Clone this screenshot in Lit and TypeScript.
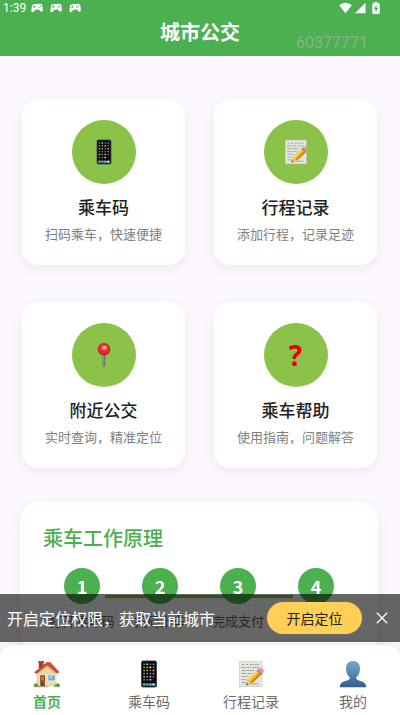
import { LitElement, html, css, svg } from "lit";
import { customElement, state } from "lit/decorators.js";

const dotColors = ["#4caf50", "#e6e6e6", "#9c4fd6", "#43c85a", "#3fa9f5", "#f0b429", "#eeeeee", "#e05252", "#f2a83b", "#7bd17f", "#d9534f", "#c9ccd1", "#3b8ff0", "#d94bc2", "#4a7df0", "#e8843c", "#e7d34c", "#39c0a3", "#cfd3d8", "#e0574a", "#2f8ff5", "#e05a3c", "#ececec", "#111111"];

const phone = html`<svg class="art" viewBox="0 0 28 28" aria-hidden="true">
  <rect x="6" y="0.6" width="16" height="26.8" rx="2" fill="#4b4d50"/>
  <rect x="6.9" y="1.3" width="14.2" height="25.4" rx="1.3" fill="#0b0b0d"/>
  ${dotColors.map((c, i) => svg`<rect x=${8.3 + (i % 4) * 3.1} y=${3.5 + Math.floor(i / 4) * 3.1} width="1.7" height="1.6" rx="0.5" fill=${c}/>`)}
  <rect x="7.4" y="23" width="13.2" height="3" rx="0.6" fill="#37474f"/>
  <rect x="8.1" y="23.5" width="2.2" height="2" rx="0.5" fill="#58d36a"/>
  <rect x="11.2" y="23.5" width="2.2" height="2" rx="0.5" fill="#3fa9f5"/>
  <rect x="14.3" y="23.5" width="2.2" height="2" rx="0.5" fill="#63c7f0"/>
  <rect x="17.4" y="23.5" width="2.2" height="2" rx="0.5" fill="#ececec"/>
</svg>`;

const memo = html`<svg class="art" viewBox="0 0 28 28" aria-hidden="true">
  <rect x="2.2" y="1" width="23.2" height="26" fill="#c9c9c6"/>
  <rect x="2.8" y="1.5" width="22" height="24.8" fill="#e4e4e1"/>
  <g stroke="#8d8d8d" stroke-width="0.9" fill="none">
    <path d="M5 4.5h3m1 0h2m2 0h4m1 0h4" stroke-dasharray="2 0.7"/>
    <path d="M4.5 7.5h5m1 0h4m1.500 0h6" stroke-dasharray="1.600 0.6"/>
    <path d="M5 10.500h4m1 0h7" stroke-dasharray="2.200 0.7"/>
    <path d="M4.500 13.500h5m1 0h5" stroke-dasharray="1.800 0.6"/>
    <path d="M5 16.500h7M4.500 19.500h5M5 22.500h4M13 24h9" stroke-dasharray="1.700 0.6"/>
  </g>
  <path d="M9.200 25.300l1.400-5.600L20.300 10l4.400 4.200-9.800 9.300z" fill="#f3b01c"/>
  <path d="M10.600 19.700L20.300 10l1.500 1.400-9.700 9.800z" fill="#ffd255"/>
  <path d="M13.500 22.300l9.700-9.500 1.500 1.400-9.800 9.300z" fill="#c98a10"/>
  <path d="M9.200 25.300l1.400-5.600 4.300 3.800z" fill="#e8c492"/>
  <path d="M9.200 25.300l0.600-2.300 1.600 1.600z" fill="#3a3128"/>
  <path d="M19.600 10.700l1.700-1.700 4.400 4.200-1.700 1.700z" fill="#8d949c"/>
  <path d="M21.300 9c1.300-1.500 3.300-1.200 4.500 0s1.300 2.900-.1 4.200z" fill="#ee8f92"/>
</svg>`;

const pin = html`<svg class="art" viewBox="0 0 28 28" aria-hidden="true">
  <path d="M12.300 11h3.400l-.5 14.500c0 .9-2.300.9-2.400 0z" fill="#62646c"/>
  <path d="M13.300 13h1l-.1 12h-.6z" fill="#b2b5bf"/>
  <circle cx="14" cy="7.800" r="6.700" fill="#b91f1f"/>
  <circle cx="13.900" cy="7.400" r="5.900" fill="#df2e2a"/>
  <ellipse cx="14.400" cy="6.400" rx="3.300" ry="2.600" fill="#ee6a5c"/>
  <ellipse cx="14.800" cy="5.800" rx="1.600" ry="1.200" fill="#ffc9bf"/>
</svg>`;

const house = html`<svg class="art" viewBox="0 0 28 28" aria-hidden="true">
  <path d="M5.800 1.500h4.700v7H5.800z" fill="#9c3a2c"/>
  <path d="M5.200 1h6v1.800h-6z" fill="#bb5040"/>
  <path d="M3.500 13L14 3.800 23.500 12v14.500h-20z" fill="#efd7a4"/>
  <path d="M3.500 13.500L14 5l9.500 8.500V15L14 7.500 3.500 15z" fill="#d8b67b"/>
  <path d="M14 2.200h3.200l9 9.800-1.800 1.400L14 5 3.200 13.700 1.400 12.300z" fill="#b3342c"/>
  <path d="M14 2.200L1.400 12.300l.9.700L14 3.700l11 9.200 1.200-.9-9-9.800z" fill="#d05246"/>
  <path d="M6.500 14.500h6.200v12H6.500z" fill="#f7ead0"/>
  <path d="M7.200 15.200H12v11.300H7.200z" fill="#87442d"/>
  <path d="M8.200 16.400H11v4H8.200z" fill="#b8795a"/>
  <circle cx="11" cy="22" r=".6" fill="#f3cf63"/>
  <path d="M14.500 14.500h8v7h-8z" fill="#fff5dd"/>
  <path d="M15.300 15.300h6.400v5.300h-6.400z" fill="#5ba4d6"/>
  <path d="M15.300 15.300h6.400l-6.400 4z" fill="#8bc5e8"/>
  <path d="M18.100 15.300h.7v5.300h-.7z" fill="#dbeaf2"/>
  <path d="M5.500 26h9v1.300h-9z" fill="#a8a093"/>
  <circle cx="2.800" cy="25.200" r="2" fill="#60953c"/>
  <circle cx="4.700" cy="25.800" r="1.400" fill="#7cae47"/>
  <circle cx="24.800" cy="25.200" r="2" fill="#60953c"/>
  <circle cx="22.600" cy="25.700" r="1.500" fill="#7cae47"/>
</svg>`;

const person = html`<svg class="art" viewBox="0 0 28 28" aria-hidden="true">
  <defs><linearGradient id="bust" x1="0" y1="0" x2="0" y2="1">
    <stop offset="0" stop-color="#76a9cd"/><stop offset="1" stop-color="#345f8c"/>
  </linearGradient></defs>
  <path d="M14 1c4.500 0 7.200 3.100 7 8-.2 3.900-1.700 6.600-3.600 8.300-.3 1.800.5 2.700 2.500 3.300 4.600 1.300 7.100 2.200 7.300 6.600H.8c.2-4.400 2.700-5.300 7.300-6.600 2-.6 2.800-1.500 2.500-3.300C8.700 15.600 7.200 12.900 7 9c-.2-4.900 2.500-8 7-8z" fill="url(#bust)"/>
</svg>`;

const gamepad = html`<svg class="pad" viewBox="0 0 12 10" aria-hidden="true">
  <path d="M3 1.200L9.300.8c1.300 0 1.900.8 2.100 2l.4 4.200c.1 1.700-1.700 2.200-2.600.9L8 6.500l-3.800.3-1.100 1.700C2.300 9.800.3 9.500.4 7.800L.9 3.200C1 2 1.800 1.300 3 1.200z" fill="#fff"/>
  <path d="M3.200 2.500v2.400M2 3.700h2.400" stroke="#4caf50" stroke-width=".9"/>
  <circle cx="8" cy="4.600" r=".7" fill="#4caf50"/><circle cx="9.400" cy="3" r=".7" fill="#4caf50"/>
</svg>`;

@customElement("app-root")
export class AppRoot extends LitElement {
  @state() private bannerOpen = true;
  @state() private tab = 0;

  static styles = css`
    :host {
      display: block;
      font-family: Roboto, "Noto Sans CJK SC", sans-serif;
      color: #212121;
    }
    * { box-sizing: border-box; }
    button { font: inherit; color: inherit; border: 0; padding: 0; cursor: pointer; }
    h1, h2, p, ol { margin: 0; padding: 0; }
    .shell {
      position: relative;
      display: flex;
      flex-direction: column;
      height: 100vh;
      overflow: hidden;
      background: #fdf7ff;
    }
    header { position: relative; flex: none; background: #4caf50; color: #fff; padding-bottom: 8px; }
    .status { display: flex; align-items: center; height: 16px; padding: 0 20px 0 3px; font-size: 12px; }
    .pads { display: flex; gap: 7px; margin-left: 5px; flex: 1; }
    .pad { width: 12px; height: 10px; }
    .signals { display: flex; align-items: center; gap: 3px; }
    .signals svg { display: block; height: 12px; }
    .battery { margin-left: 3px; }
    h1 {
      font: 700 20px/32px "Noto Sans CJK SC", sans-serif;
      text-align: center;
    }
    .serial { position: absolute; right: 32px; top: 35px; font-size: 16px; line-height: 16px; color: #82b886; }
    main { flex: 1; min-height: 0; overflow-y: auto; scrollbar-width: none; padding: 43px 23px 140px 22px; }
    .cards { display: grid; grid-template-columns: 1fr 1fr; gap: 37px 29px; }
    .card {
      display: flex;
      flex-direction: column;
      align-items: center;
      padding: 21px 8px;
      border-radius: 16px;
      background: #fff;
      box-shadow: 0 4px 12px rgba(70, 30, 90, 0.07);
    }
    .disc {
      display: grid;
      place-items: center;
      width: 64px;
      height: 64px;
      border-radius: 50%;
      background: #8bc34a;
    }
    .disc .art { width: 26px; height: 26px; }
    .art { display: block; width: 28px; height: 28px; }
    .mark { font: 700 28px/28px "Noto Sans", sans-serif; color: #e60000; }
    .name { margin-top: 11px; font-size: 17px; line-height: 24px; font-weight: 500; }
    .hint { margin-top: 5px; font-size: 13px; line-height: 20px; color: #808080; white-space: nowrap; }
    .card, .tab, .enable, .step { font-family: "Noto Sans CJK SC", sans-serif; }
    .how {
      margin: 33px -1px 0 -2px;
      padding: 23px;
      border-radius: 20px;
      background: #fff;
      box-shadow: 0 4px 12px rgba(70, 30, 90, 0.07);
    }
    h2 { font: 500 20px/28px "Noto Sans CJK SC", sans-serif; color: #4caf50; }
    .steps { position: relative; display: grid; grid-template-columns: repeat(4, 1fr); margin-top: 16px; list-style: none; }
    .steps::before {
      content: "";
      position: absolute;
      left: 20%;
      right: 20%;
      top: 27px;
      height: 3px;
      background: #8bc34a;
    }
    .step { position: relative; display: flex; flex-direction: column; align-items: center; gap: 7px; font-size: 13px; line-height: 20px; color: #666; }
    .num {
      display: grid;
      place-items: center;
      width: 36px;
      height: 36px;
      border-radius: 50%;
      background: #4caf50;
      color: #fff;
      font-size: 18px;
      font-weight: 700;
    }
    .dock { position: absolute; left: 0; right: 0; bottom: 0; display: flex; flex-direction: column; gap: 3px; }
    .banner {
      display: flex;
      align-items: center;
      height: 48px;
      padding: 0 8px 0 7px;
      background: rgba(0, 0, 0, 0.6);
      color: #fff;
    }
    .banner p { flex: 1; font: 16px/24px "Noto Sans CJK SC", sans-serif; white-space: nowrap; }
    .enable { width: 95px; height: 32px; border-radius: 16px; background: #ffcf57; color: #212121; font-size: 14px; }
    .close { width: 20px; height: 20px; margin-left: 10px; background: none; }
    .close svg { display: block; }
    nav {
      display: grid;
      grid-template-columns: repeat(4, 25%);
      column-gap: 2px;
      justify-content: center;
      overflow: hidden;
      padding: 15px 0 3px;
      border-radius: 14px 14px 0 0;
      background: #fff;
      box-shadow: 0 -2px 8px rgba(70, 30, 90, 0.1);
    }
    .tab { display: flex; flex-direction: column; align-items: center; gap: 3px; padding-bottom: 1px; background: none; font-size: 14px; line-height: 20px; color: #6b6b6b; }
    .tab.on { color: #4caf50; font-weight: 700; }
  `;

  render() {
    const cards = [
      [phone, "乘车码", "扫码乘车，快速便捷"],
      [memo, "行程记录", "添加行程，记录足迹"],
      [pin, "附近公交", "实时查询，精准定位"],
      [html`<span class="mark">?</span>`, "乘车帮助", "使用指南，问题解答"],
    ];
    const tabs = [[house, "首页"], [phone, "乘车码"], [memo, "行程记录"], [person, "我的"]];
    const steps = ["打开乘车码", "扫码上车", "完成支付", "到站下车"];
    return html`
      <div class="shell">
        <header>
          <div class="status">
            <span>1:39</span>
            <div class="pads">${gamepad}${gamepad}${gamepad}</div>
            <div class="signals">
              <svg width="13" viewBox="0 0 13 12" aria-hidden="true"><path d="M.2 3.300C4-.1 9-.1 12.800 3.300L6.500 11.300z" fill="#fff"/></svg>
              <svg width="11" viewBox="0 0 11 12" aria-hidden="true"><path d="M10.500 .8v10.500H0z" fill="#fff"/></svg>
              <svg class="battery" width="8" viewBox="0 0 8 12" aria-hidden="true"><path d="M2.500 0h3v1.300h1.300q.9 0 .9.9v8.900q0 .9-.9.900H1.200q-.9 0-.9-.9V2.200q0-.9.9-.9h1.300z" fill="#fff"/><path d="M4.500 3L1.900 7.300h1.700v3L6.200 6H4.500z" fill="#4caf50"/></svg>
            </div>
          </div>
          <h1>城市公交</h1>
          <span class="serial">60377771</span>
        </header>
        <main>
          <div class="cards">
            ${cards.map(([icon, name, hint]) => html`
              <button class="card" type="button">
                <span class="disc">${icon}</span>
                <span class="name">${name}</span>
                <span class="hint">${hint}</span>
              </button>`)}
          </div>
          <section class="how">
            <h2>乘车工作原理</h2>
            <ol class="steps">
              ${steps.map((s, i) => html`<li class="step"><span class="num">${i + 1}</span><span>${s}</span></li>`)}
            </ol>
          </section>
        </main>
        <div class="dock">
          ${this.bannerOpen ? html`
            <div class="banner">
              <p>开启定位权限，获取当前城市</p>
              <button class="enable" type="button">开启定位</button>
              <button class="close" type="button" aria-label="关闭" @click=${() => (this.bannerOpen = false)}>
                <svg width="20" height="20" viewBox="0 0 20 20" aria-hidden="true"><path d="M4.800 4.800l10.400 10.400M15.200 4.800L4.800 15.200" stroke="#fff" stroke-width="1.300"/></svg>
              </button>
            </div>` : null}
          <nav>
            ${tabs.map(([icon, label], i) => html`
              <button class="tab ${this.tab === i ? "on" : ""}" type="button" @click=${() => (this.tab = i)}>
                ${icon}<span>${label}</span>
              </button>`)}
          </nav>
        </div>
      </div>`;
  }
}
